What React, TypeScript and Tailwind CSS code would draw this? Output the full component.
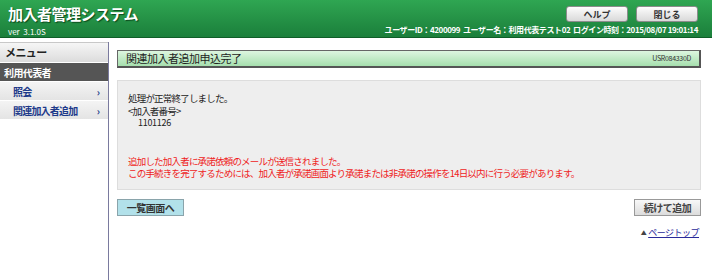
const jp = { fontFamily: '"Noto Sans CJK JP", "Liberation Sans", sans-serif' };

function HeaderButton({ label }: { label: string }) {
  return (
    <button className="w-[62px] h-[16px] rounded-[3px] border border-[#8c8c8c] bg-gradient-to-b from-[#fdfdfd] to-[#d9d9d9] text-[9px] font-bold text-[#333] leading-none">
      {label}
    </button>
  );
}

function MenuItem({ label }: { label: string }) {
  return (
    <div className="h-[19px] flex items-center justify-between pl-[13px] pr-[8px] bg-gradient-to-b from-[#f4f4f4] to-[#e4e4e4] border-b border-white">
      <span className="text-[10px] font-bold text-[#1d3a8a] tracking-[-0.8px]">{label}</span>
      <span className="text-[10px] font-bold text-[#1d3a8a]">›</span>
    </div>
  );
}

export default function App() {
  return (
    <div className="w-[712px] h-[280px] bg-white overflow-hidden" style={jp}>
      <header className="h-[38px] flex justify-between px-[8px] bg-gradient-to-b from-[#2fa652] to-[#1b7f3b] border-b border-[#0f5e28]">
        <div className="flex flex-col">
          <h1 className="mt-[4px] text-[15px] leading-[19px] font-bold tracking-[-0.5px] text-white [text-shadow:1px_1px_1px_#0b4a1d]">
            加入者管理システム
          </h1>
          <span className="mt-[4px] text-[8px] leading-[10px] text-white">ver&nbsp;&nbsp;3.1.0S</span>
        </div>
        <div className="flex flex-col items-end pr-[6px]">
          <div className="mt-[6px] flex gap-[8px]">
            <HeaderButton label="ヘルプ" />
            <HeaderButton label="閉じる" />
          </div>
          <div className="mt-[3px] text-[8px] leading-[10px] font-bold tracking-[-0.4px] text-white whitespace-nowrap">
            ユーザーID：4200099&nbsp;&nbsp;ユーザー名：利用代表テスト02&nbsp;&nbsp;ログイン時刻：2015/08/07 19:01:14
          </div>
        </div>
      </header>

      <div className="flex mt-[4px] h-[238px]">
        <aside className="w-[109px] shrink-0 border-r border-[#7a7a9e]">
          <div className="w-[108px] h-[20px] flex items-center px-[5px] bg-gradient-to-b from-[#f6f6f6] to-[#dcdcdc] border-t border-[#c8c8c8]">
            <span className="text-[11px] font-bold tracking-[-0.6px] text-[#222]">メニュー</span>
          </div>
          <div className="h-[20px] flex items-center px-[4px] bg-[#555555] border-y border-white">
            <span className="text-[10px] font-bold tracking-[-0.6px] text-white">利用代表者</span>
          </div>
          <MenuItem label="照会" />
          <MenuItem label="関連加入者追加" />
        </aside>

        <main className="flex-1 pl-[8px] pr-[11px] pt-[8px]">
          <div className="h-[18px] flex items-center justify-between pl-[8px] pr-[8px] bg-gradient-to-b from-[#ddf6e0] to-[#a6dfae] border border-[#666] border-r-2 border-b-2 border-r-[#555] border-b-[#555]">
            <span className="text-[11px] tracking-[-0.5px] text-[#222]">関連加入者追加申込完了</span>
            <span className="text-[7px] text-[#333] tracking-[-0.3px]">USR084330D</span>
          </div>

          <section className="mt-[12px] h-[110px] bg-[#eeeeee] border border-[#dddddd] pl-[10px] pt-[11px] text-[9.5px] tracking-[-0.8px]">
            <p className="leading-[12.5px] text-[#222]">処理が正常終了しました。</p>
            <p className="leading-[12.5px] text-[#222]">&lt;加入者番号&gt;</p>
            <p className="text-[9px] tracking-[-0.3px] leading-[12.5px] text-[#222] pl-[10px]">1101126</p>
            <div className="mt-[25px] leading-[12.5px] text-[#ee1c1c]">
              <p>追加した加入者に承諾依頼のメールが送信されました。</p>
              <p>この手続きを完了するためには、加入者が承諾画面より承諾または非承諾の操作を14日以内に行う必要があります。</p>
            </div>
          </section>

          <div className="mt-[9px] flex justify-between">
            <button className="w-[67px] h-[17px] bg-[#b2e1ea] border border-[#8aa4ab] text-[10px] font-bold tracking-[-0.5px] text-[#333] leading-none">
              一覧画面へ
            </button>
            <button className="w-[67px] h-[17px] bg-gradient-to-b from-[#f8f8f8] to-[#dcdcdc] border border-[#999] text-[10px] font-bold tracking-[-0.5px] text-[#444] leading-none">
              続けて追加
            </button>
          </div>

          <div className="mt-[10px] flex justify-end pr-[2px]">
            <a href="#" className="text-[9px] tracking-[-0.5px] text-[#2a2a9a] flex items-center gap-[2px]">
              <span className="text-[6px] text-[#444]">▲</span>
              <span className="underline">ページトップ</span>
            </a>
          </div>
        </main>
      </div>
    </div>
  );
}
